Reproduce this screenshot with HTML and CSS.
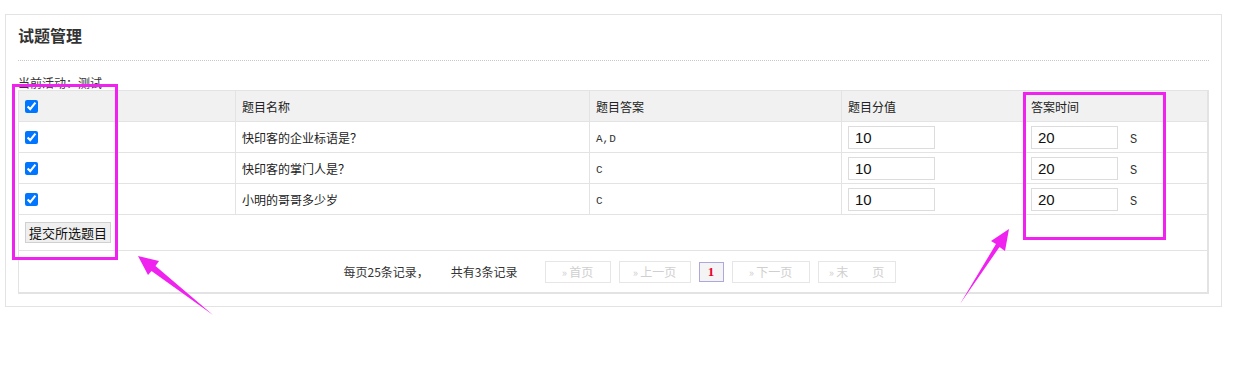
FILE: index.html
```html
<!DOCTYPE html>
<html lang="zh-CN">
<head>
    <meta charset="UTF-8">
    <title>试题管理</title>
    <link rel="stylesheet" href="styles.css">
</head>
<body>

    <!-- Panel -->
    <div class="panel">
        <div class="panel-title">试题管理</div>
        <div class="activity">当前活动：测试</div>

        <div class="grid-box">
            <!-- Header -->
            <div class="row head">
                <div class="cell"><input type="checkbox" checked></div>
                <div class="cell">题目名称</div>
                <div class="cell">题目答案</div>
                <div class="cell">题目分值</div>
                <div class="cell">答案时间</div>
            </div>

            <!-- Questions -->
            <div class="row">
                <div class="cell"><input type="checkbox" checked></div>
                <div class="cell">快印客的企业标语是？</div>
                <div class="cell mono">A,D</div>
                <div class="cell"><input type="text" class="num" value="10"></div>
                <div class="cell"><input type="text" class="num" value="20"><span class="unit">S</span></div>
            </div>
            <div class="row">
                <div class="cell"><input type="checkbox" checked></div>
                <div class="cell">快印客的掌门人是？</div>
                <div class="cell mono">C</div>
                <div class="cell"><input type="text" class="num" value="10"></div>
                <div class="cell"><input type="text" class="num" value="20"><span class="unit">S</span></div>
            </div>
            <div class="row">
                <div class="cell"><input type="checkbox" checked></div>
                <div class="cell">小明的哥哥多少岁</div>
                <div class="cell mono">C</div>
                <div class="cell"><input type="text" class="num" value="10"></div>
                <div class="cell"><input type="text" class="num" value="20"><span class="unit">S</span></div>
            </div>

            <!-- Submit -->
            <div class="submit-row">
                <button class="submit-btn">提交所选题目</button>
            </div>

            <!-- Pager -->
            <div class="pager">
                <span class="pager-info">每页25条记录，</span>
                <span class="pager-info">共有3条记录</span>
                <a class="page-btn w-first"><span class="raquo">»</span> 首页</a>
                <a class="page-btn w-prev"><span class="raquo">»</span> 上一页</a>
                <span class="page-current">1</span>
                <a class="page-btn w-next"><span class="raquo">»</span> 下一页</a>
                <a class="page-btn w-last"><span class="raquo">»</span> 末　　页</a>
            </div>
        </div>
    </div>

    <!-- Annotation marks -->
    <div class="mark mark-left"></div>
    <div class="mark mark-right"></div>
    <svg class="arrows" width="1237" height="373" viewBox="0 0 1237 373">
        <polygon points="138,256 159,261 155.5,266 213,315 151.5,271 148,275" fill="#f022f0"/>
        <polygon points="1009,229 1005,251 999.5,247 960,304 996,244 991,241" fill="#f022f0"/>
    </svg>

</body>
</html>
```

FILE: styles.css
```css
/* General */
body {
    margin: 0;
    padding: 14px 0 0 5px;
    font-family: "Noto Sans CJK SC", "Liberation Sans", sans-serif;
    font-size: 12px;
    color: #333;
    background: #fff;
    position: relative;
    height: 359px;
    overflow: hidden;
}

/* Panel */
.panel {
    width: 1217px;
    box-sizing: border-box;
    border: 1px solid #e3e3e3;
    padding: 0 12px 12px 12px;
}

.panel-title {
    height: 45px;
    line-height: 41px;
    font-size: 16px;
    font-weight: bold;
    color: #333;
    border-bottom: 1px dotted #c8c8c8;
}

.activity {
    margin-top: 14px;
    line-height: 15px;
    height: 15px;
}

/* Question grid */
.grid-box {
    position: relative;
    border: 1px solid #e3e3e3;
    border-right-width: 2px;
    border-bottom-width: 2px;
    background: #fff;
}

.row {
    display: grid;
    grid-template-columns: 216px 354px 252px 183px 183px;
    height: 31px;
    box-sizing: border-box;
    border-bottom: 1px solid #e3e3e3;
}

.row.head {
    background: #f1f1f1;
    color: #333;
}

.cell {
    display: flex;
    align-items: center;
    padding: 0 6px;
    box-sizing: border-box;
    border-left: 1px solid #e3e3e3;
    color: #222;
}

.cell:first-child {
    border-left: none;
}

.cell input[type="checkbox"] {
    margin: 0;
    width: 13px;
    height: 13px;
}

.mono {
    font-family: "Liberation Mono", monospace;
    font-size: 11px;
    color: #333;
    padding-top: 4px;
}

.num {
    width: 87px;
    height: 23px;
    box-sizing: border-box;
    border: 1px solid #dcdcdc;
    padding: 0 6px;
    margin: 0;
    font-family: "Liberation Sans", Arial, sans-serif;
    font-size: 15px;
    color: #111;
    outline: none;
}

.unit {
    margin-left: 12px;
    margin-top: 5px;
    font-family: "Liberation Mono", monospace;
    font-size: 12px;
    color: #333;
}

/* Submit row */
.submit-row {
    height: 36px;
    box-sizing: border-box;
    border-bottom: 1px solid #e3e3e3;
    padding-left: 6px;
    display: flex;
    align-items: center;
}

.submit-btn {
    width: 86px;
    height: 21px;
    padding: 0;
    margin: 0;
    border: 1px solid #d0d0d0;
    background: #efefef;
    font-family: "Noto Sans CJK SC", sans-serif;
    font-size: 13px;
    color: #111;
    line-height: 19px;
}

/* Pager */
.pager {
    height: 41px;
    display: flex;
    align-items: center;
    justify-content: center;
    padding-left: 13px;
    color: #333;
}

.pager-info {
    margin-right: 22px;
}

.pager-info + .pager-info {
    margin-right: 27px;
}

.page-btn {
    height: 22px;
    box-sizing: border-box;
    border: 1px solid #e6e6e6;
    color: #cfcfcf;
    display: flex;
    align-items: center;
    justify-content: center;
    margin-right: 8px;
    text-decoration: none;
}

.raquo {
    font-size: 11px;
    margin-right: 2px;
}

.w-first { width: 66px; }
.w-prev  { width: 72px; }
.w-next  { width: 78px; }
.w-last  { width: 78px; margin-right: 0; }

.page-current {
    width: 25px;
    height: 20px;
    box-sizing: border-box;
    border: 1px solid #aaa8dc;
    background: #f4f4f4;
    color: #e8002a;
    font-family: "Liberation Serif", serif;
    font-weight: bold;
    font-size: 13px;
    display: flex;
    align-items: center;
    justify-content: center;
    margin-right: 8px;
}

/* Annotation marks */
.mark {
    position: absolute;
    border: 3px solid #f022f0;
    box-sizing: border-box;
}

.mark-left {
    left: 12px;
    top: 84px;
    width: 106px;
    height: 176px;
}

.mark-right {
    left: 1023px;
    top: 92px;
    width: 143px;
    height: 148px;
}

.arrows {
    position: absolute;
    left: 0;
    top: 0;
    pointer-events: none;
}
```
